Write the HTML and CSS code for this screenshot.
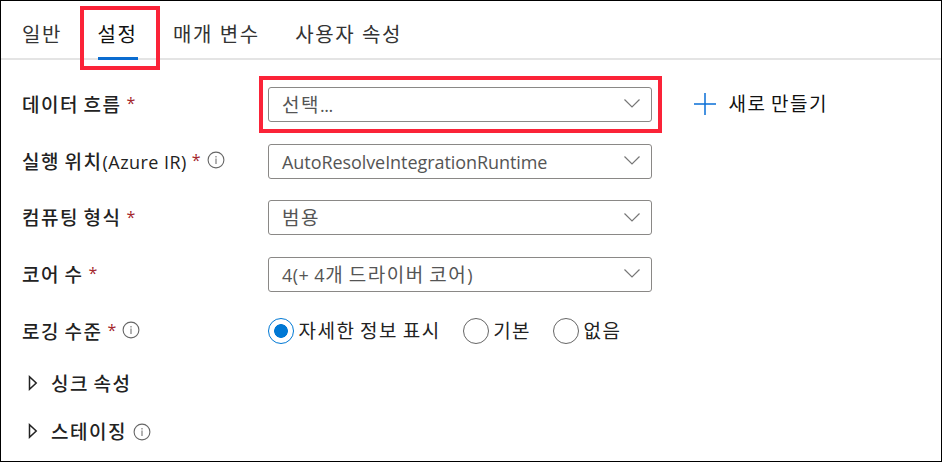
FILE: index.html
```html
<!DOCTYPE html>
<html lang="ko">
<head>
<meta charset="utf-8">
<title>설정</title>
<link rel="stylesheet" href="styles.css">
</head>
<body>
<svg width="0" height="0" class="defs" aria-hidden="true">
  <symbol id="chevron" viewBox="0 0 18 12"><path d="M1.500 1.500 9 9 16.500 1.500" fill="none" stroke="#777" stroke-width="1.200"/></symbol>
  <symbol id="info" viewBox="0 0 18 18"><circle cx="9" cy="9" r="7.900" fill="none" stroke="#666" stroke-width="1.100"/><path d="M9 7.500v5.500M9 5v1.400" stroke="#888" stroke-width="1.300"/></symbol>
  <symbol id="caret" viewBox="0 0 10 16"><path d="M1.500 1.800v12.400L8.200 8Z" fill="none" stroke="#222" stroke-width="1.500"/></symbol>
</svg>
<main class="frame">
  <nav class="tabs">
    <a class="tab">일반</a>
    <a class="tab active">설정<i class="mark tab-mark"></i></a>
    <a class="tab">매개 변수</a>
    <a class="tab">사용자 속성</a>
  </nav>
  <section class="form">
    <div class="row">
      <div class="label"><span>데이터 흐름</span><b class="req">*</b></div>
      <div class="select"><span>선택<span class="latin dots">...</span></span><svg class="chevron"><use href="#chevron"/></svg><i class="mark select-mark"></i></div>
      <div class="create"><svg class="plus" viewBox="0 0 24 24"><path d="M1 12h22M12 1v22" stroke="#0a6fd6" stroke-width="1.500"/></svg><span>새로 만들기</span></div>
    </div>
    <div class="row">
      <div class="label"><span>실행 위치<span class="latin wide">(Azure IR)</span></span><b class="req">*</b><svg class="info"><use href="#info"/></svg></div>
      <div class="select"><span class="runtime">AutoResolveIntegrationRuntime</span><svg class="chevron"><use href="#chevron"/></svg></div>
    </div>
    <div class="row">
      <div class="label"><span>컴퓨팅 형식</span><b class="req">*</b></div>
      <div class="select"><span>범용</span><svg class="chevron"><use href="#chevron"/></svg></div>
    </div>
    <div class="row">
      <div class="label"><span>코어 수</span><b class="req">*</b></div>
      <div class="select"><span><span class="latin wide">4(+ 4</span>개 드라이버 코어<span class="latin">)</span></span><svg class="chevron"><use href="#chevron"/></svg></div>
    </div>
    <div class="row">
      <div class="label"><span>로깅 수준</span><b class="req">*</b><svg class="info"><use href="#info"/></svg></div>
      <div class="radios">
        <label class="radio checked"><i class="dot"></i><span>자세한 정보 표시</span></label>
        <label class="radio"><i class="dot"></i><span>기본</span></label>
        <label class="radio"><i class="dot"></i><span>없음</span></label>
      </div>
    </div>
  </section>
  <section class="groups">
    <div class="group"><svg class="caret"><use href="#caret"/></svg><span>싱크 속성</span></div>
    <div class="group"><svg class="caret"><use href="#caret"/></svg><span>스테이징</span><svg class="info"><use href="#info"/></svg></div>
  </section>
</main>
</body>
</html>
```
FILE: styles.css
```css
* { box-sizing: border-box; }
body {
  margin: 0;
  background: #fff;
  color: #222;
  font-family: "Open Sans", "Noto Sans CJK KR", sans-serif;
  font-size: 19px;
  line-height: 28px;
  letter-spacing: 1.5px;
  word-spacing: -1.800px;
  white-space: nowrap;
}
svg { display: block; flex: none; }
.defs { position: absolute; }
.frame {
  width: 942px;
  height: 462px;
  border: 1px solid #000;
  overflow: hidden;
}
.tabs {
  display: flex;
  gap: 35.500px;
  height: 59px;
  padding: 0 21px;
  border-bottom: 2px solid #e4e4e4;
  font-size: 20px;
  letter-spacing: 1.600px;
  word-spacing: 0;
  color: #333;
}
.tab { position: relative; height: 59px; padding-top: 20px; }
.tab.active { border-bottom: 3px solid #0a6cd0; color: #111; }
.mark { position: absolute; border: 4px solid #fb2338; pointer-events: none; }
.tab-mark { left: -17.500px; top: 5px; width: 80px; height: 64px; }
.select-mark { left: -10.500px; top: -12px; width: 403px; height: 57px; }
.form { padding: 16px 0 0 21px; }
.row { display: flex; align-items: center; height: 56.700px; }
.label { display: flex; align-items: center; width: 246px; padding-top: 1px; font-weight: 500; }
.latin { font-size: 18px; letter-spacing: 0.200px; word-spacing: 0; }
.latin.wide { letter-spacing: 0.450px; }
.latin.dots { letter-spacing: -0.500px; }
.req { margin: -3px 0 0 5px; color: #a4262c; font-weight: 400; font-size: 16px; letter-spacing: 0; }
.info { width: 18px; height: 18px; margin: -3px 0 0 6px; }
.select {
  position: relative;
  display: flex;
  align-items: center;
  justify-content: space-between;
  width: 384px;
  height: 35px;
  padding: 1px 10px 0 13px;
  border: 1.500px solid #8a8886;
  border-radius: 3px;
  color: #555;
}
.runtime { font-size: 18px; letter-spacing: -0.070px; }
.chevron { width: 18px; height: 12px; margin-top: -1px; }
.create { display: flex; align-items: center; gap: 12px; margin-left: 40.500px; margin-top: -1px; color: #111; }
.plus { width: 24px; height: 24px; }
.radios { display: flex; gap: 22px; margin-top: -1px; }
.radio { display: flex; align-items: center; gap: 4.500px; }
.dot { display: block; width: 26px; height: 26px; border: 1.500px solid #666; border-radius: 50%; }
.checked .dot {
  border-color: #0078d4;
  background: radial-gradient(circle, #0078d4 6.500px, transparent 7.200px);
}
.groups { padding: 1px 0 0 27px; }
.group { display: flex; align-items: center; height: 48px; font-weight: 500; }
.group .info { margin-top: -1px; }
.caret { width: 10px; height: 16px; margin: -3px 13px 0 0; }
```
